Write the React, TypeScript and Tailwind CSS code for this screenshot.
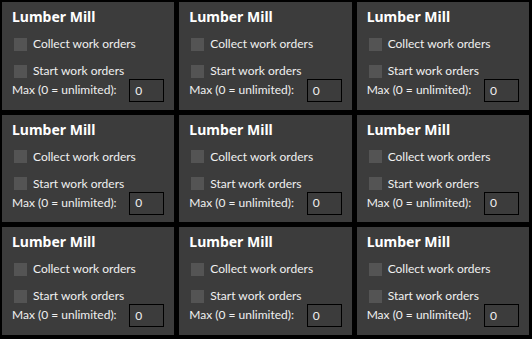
const panels = Array.from({length: 9}, (_, i) => i);

function Check({label}: {label: string}) {
    return (
        <div className="flex items-center h-[16px] pl-[2px]">
            <span className="block w-[13px] h-[13px] bg-[#545454]" />
            <span className="ml-[6px] text-[12px] leading-[16px] text-[#f0f0f0]">{label}</span>
        </div>
    );
}

function MillPanel() {
    return (
        <div className="bg-[#3c3c3c] pl-[10px] pt-[6px] flex flex-col"
             style={{fontFamily: 'Lato, "Noto Sans", sans-serif'}}>
            <div className="font-bold text-[14px] leading-[18px] text-white"
                 style={{fontFamily: '"Noto Sans", sans-serif'}}>Lumber Mill</div>
            <div className="mt-[10px]">
                <Check label="Collect work orders" />
            </div>
            <div className="mt-[11px]">
                <Check label="Start work orders" />
            </div>
            <div className="flex items-start -mt-[1px]">
                <span className="text-[12px] leading-[16px] text-[#f0f0f0] mt-[4px]">Max (0 = unlimited):</span>
                <div
                    className="ml-auto mr-[10px] mt-[1px] w-[35px] h-[23px] border border-black flex items-center pl-[5px] text-[12px] text-[#f0f0f0]">
                    0
                </div>
            </div>
        </div>
    );
}

export default function App() {
    return (
        <div
            className="w-[532px] h-[339px] bg-black pt-[2px] pl-[2px] pr-[3px] pb-[4px] grid grid-cols-3 grid-rows-3 gap-[5px]">
            {panels.map((i) => (
                <MillPanel key={i} />
            ))}
        </div>
    );
}
